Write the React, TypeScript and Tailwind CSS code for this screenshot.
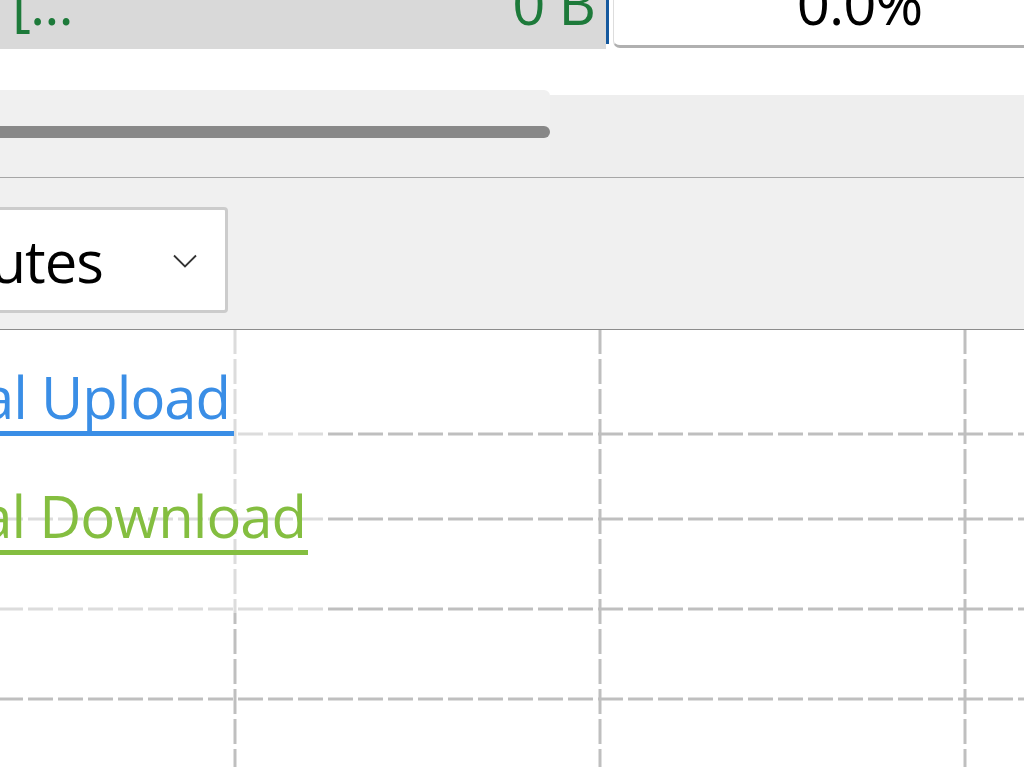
import React from "react";

const font = "font-['Open_Sans',_'Noto_Sans',_sans-serif]";

function Chevron() {
  return (
    <svg width="24" height="14" viewBox="0 0 24 14" className="shrink-0 mt-[2px]">
      <path d="M1 1.5 L12 12.5 L23 1.5" fill="none" stroke="#333333" strokeWidth="1.8" />
    </svg>
  );
}

function Grid() {
  const hs = [104, 189, 279, 369];
  const vs = [235, 600, 965];
  return (
    <svg className="absolute inset-0" width="1024" height="437" viewBox="0 0 1024 437">
      {hs.map((y) => (
        <line key={"h" + y} x1="0" x2="1024" y1={y} y2={y} stroke="#bfbfbf" strokeWidth="3" strokeDasharray="25 5" strokeDashoffset="2" />
      ))}
      {vs.map((x) => (
        <line key={"v" + x} x1={x} x2={x} y1="0" y2="437" stroke="#bfbfbf" strokeWidth="3" strokeDasharray="25 5" strokeDashoffset="1" />
      ))}
    </svg>
  );
}

export default function App() {
  return (
    <div className={`w-[1024px] h-[768px] overflow-hidden bg-white relative ${font}`}>
      {/* data row */}
      <div className="flex w-[1200px] h-[49px] overflow-hidden">
        <div className="w-[606px] shrink-0 h-[49px] bg-[#d9d9d9] flex justify-between pl-[12px] pr-[11px] text-[#1d7a3a] text-[58px] leading-[58px] tracking-[-1px]">
          <span className="mt-[-26.5px]">[...</span>
          <span className="mt-[-26.5px]">0 B</span>
        </div>
        <div className="w-[3px] shrink-0 h-[44px] bg-[#15599e]" />
        <div className="w-[4px] shrink-0 h-[49px] bg-white" />
        <div className="w-[492px] shrink-0 h-[48px] bg-white border-l border-[#dddddd] border-b-[3px] border-b-[#b0b0b0] rounded-bl-[7px] flex justify-center text-black text-[58px] leading-[58px] tracking-[-1px]">
          <span className="mt-[-26.5px]">0.0%</span>
        </div>
      </div>

      {/* spacer */}
      <div className="h-[41px] bg-white" />

      {/* scroll section */}
      <div className="flex h-[87px]">
        <div className="w-[550px] shrink-0 h-[87px] bg-[#f0f0f0] rounded-tr-[6px] pt-[36px]">
          <div className="h-[12px] w-full bg-[#888888] rounded-r-full" />
        </div>
        <div className="flex-1 mt-[5px] bg-[#eeeeee]" />
      </div>

      {/* toolbar */}
      <div className="h-[153px] border-t border-[#a6a6a6] border-b border-b-[#8c8c8c] bg-[#f0f0f0] pt-[29px]">
        <div className="ml-[-372px] w-[600px] h-[106px] bg-white border-[3px] border-[#cccccc] rounded-[4px] flex items-center">
          <div className="w-[472px] shrink-0 flex justify-end text-black text-[58px] leading-[58px] tracking-[-1px] mt-[1px]">
            <span className="whitespace-nowrap">Last 5 Minutes</span>
          </div>
          <div className="ml-[70px]">
            <Chevron />
          </div>
        </div>
      </div>

      {/* chart */}
      <div className="relative h-[437px] bg-white">
        <Grid />
        <div className="absolute left-[-200px] top-0 w-[525px] h-[283px] bg-white/45 pt-[37.5px]">
          <div className="w-[434px] flex justify-end pr-[4px] pb-[5px] border-b-[5px] border-b-[#3a8ee6] text-[#3a8ee6] text-[58px] leading-[58px] tracking-[-1px] whitespace-nowrap">
            <span>Total Upload</span>
          </div>
          <div className="mt-[51.5px] w-[508px] flex justify-end pr-[2px] pb-[5px] border-b-[5px] border-b-[#84be40] text-[#84be40] text-[58px] leading-[58px] tracking-[-1px] whitespace-nowrap">
            <span>Total Download</span>
          </div>
        </div>
      </div>
    </div>
  );
}
